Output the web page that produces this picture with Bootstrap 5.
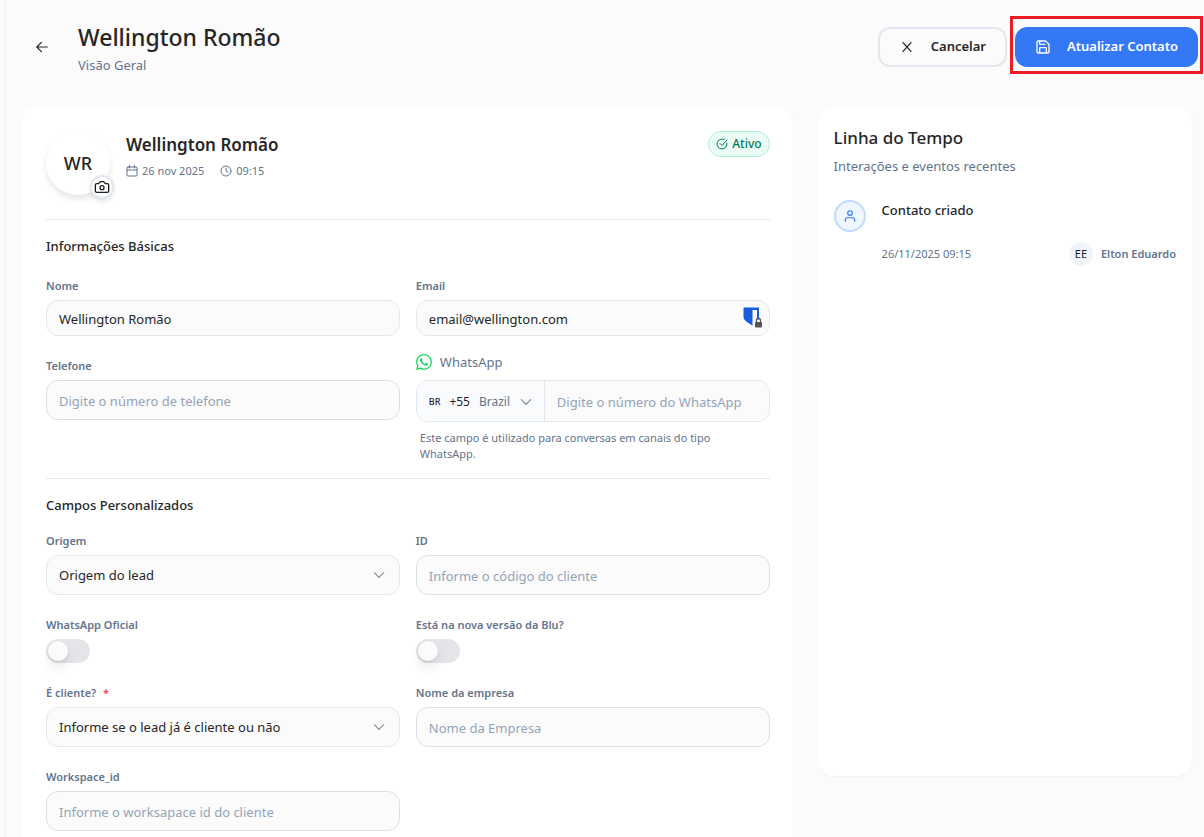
<!DOCTYPE html>
<html lang="pt-BR">
<head>
<meta charset="utf-8">
<meta name="viewport" content="width=device-width, initial-scale=1">
<title>Wellington Romão – Visão Geral</title>
<link rel="stylesheet" href="https://cdn.jsdelivr.net/npm/bootstrap@5.3.0/dist/css/bootstrap.min.css">
<style>
  :root { --ink: #262626; --slate: #64748b; --line: #e2e8f0; --page: #fbfbfb; --blue: #3478f6; }
  body { background: var(--page); color: var(--ink); font-family: "Noto Sans", "Open Sans", sans-serif; font-size: 13px; line-height: 20px; }
  svg { display: block; flex: none; fill: none; stroke: currentColor; stroke-width: 2; stroke-linecap: round; stroke-linejoin: round; }
  .shell { height: 100vh; overflow: hidden; }
  .rail { width: 6px; border-right: 1px solid #f1f1f2; flex: none; }
  .topbar { padding: 19px 6px 32px 28px; }
  .page-title { font-size: 23px; line-height: 36px; font-weight: 500; }
  .panel-title { font-size: 17px; line-height: 28px; font-weight: 500; }
  .section-title { font-size: 13px; line-height: 20px; font-weight: 500; }
  .muted { color: var(--slate); }
  .tiny { font-size: 11px; line-height: 16px; }
  .back-btn { width: 16px; height: 16px; color: var(--ink); border: 0; background: none; padding: 1px; }
  .action { height: 40px; border-radius: 12px; font-size: 13px; font-weight: 600; padding: 0 19px; gap: 16px; display: inline-flex; align-items: center; }
  .action-cancel { border: 2px solid var(--line); color: var(--ink); }
  .action-save { background: var(--blue); border-color: var(--blue); color: #fff; }
  .spotlight { position: relative; }
  .spotlight::after { content: ""; position: absolute; inset: -11px -5px -7px -5px; border: 3px solid #ed1c24; pointer-events: none; }
  .board { display: grid; grid-template-columns: minmax(0, 1fr) minmax(280px, 32%); gap: 25px; padding: 0 12px 0 16px; align-items: start; }
  .panel { background: #fff; border-radius: 16px; box-shadow: 0 1px 2px rgba(0, 0, 0, .04); }
  .panel-main { padding: 24px 23px 24px 24px; }
  .panel-side { padding: 17px 16px; height: calc(100vh - 168px); }
  .avatar { width: 64px; height: 64px; border-radius: 50%; background: #fff; font-size: 18px; font-weight: 500; box-shadow: 0 4px 6px rgba(0, 0, 0, .1); position: relative; }
  .avatar-btn { position: absolute; right: -4px; bottom: -4px; width: 24px; height: 24px; border-radius: 50%; border: 2px solid var(--line); background: #fff; padding: 0; color: #1f1f1f; display: grid; place-items: center; box-shadow: 0 2px 4px rgba(0, 0, 0, .12); }
  .status { height: 26px; border: 1px solid #a7f3d0; border-radius: 13px; background: #ecfdf5; color: #047857; font-size: 12px; font-weight: 500; padding: 0 7px; gap: 4px; }
  .rule { border: 0; border-top: 1px solid var(--line); opacity: 1; margin: 24px 0 16px; }
  .rule-tight { margin-top: 16px; }
  .fields { display: grid; grid-template-columns: 1fr 1fr; column-gap: 16px; row-gap: 20px; }
  .fields-basic { row-gap: 16px; margin-top: 20px; }
  .fields-custom { margin-top: 16px; }
  .tag { display: block; font-size: 11px; line-height: 20px; font-weight: 600; color: var(--slate); margin-bottom: 4px; }
  .required { color: #ef4444; }
  .form-control, .form-select { height: 40px; border: 1px solid var(--line); border-radius: 12px; background-color: var(--page); color: var(--ink); font-size: 13px; line-height: 20px; padding: 2px 12px 0; }
  .form-control.entry { border-color: #dcdfe6; }
  .form-control.short { height: 36px; }
  .form-control::placeholder { color: #94a3b8; opacity: 1; }
  .form-select { padding: 0 40px 0 12px; background-size: 14px 14px; background-position: right 13px center; background-image: url("data:image/svg+xml,%3Csvg xmlns='http://www.w3.org/2000/svg' viewBox='0 0 24 24' fill='none' stroke='%238c8c8c' stroke-width='2' stroke-linecap='round' stroke-linejoin='round'%3E%3Cpath d='m4 8 8 8 8-8'/%3E%3C/svg%3E"); }
  .vault { position: absolute; right: 8px; top: 7px; stroke: none; }
  .wa-tag { font-size: 13px; line-height: 20px; gap: 8px; margin-bottom: 8px; }
  .phone { height: 42px; border: 1px solid var(--line); border-radius: 12px; background: var(--page); overflow: hidden; }
  .phone .form-control { border: 0; border-radius: 0; height: 40px; }
  .country { border: 0; border-right: 1px solid var(--line); background: #f9fbfd; padding: 2px 13px 0 12px; gap: 9px; font-size: 12px; width: 128px; flex: none; color: var(--ink); }
  .country-code { font-size: 9px; font-weight: 500; }
  .country svg { margin-left: auto; color: #7d8590; }
  .hint { margin: 8px 4px 0; }
  .form-switch { padding: 0; min-height: 0; margin: 0; }
  .form-switch .form-check-input { display: block; float: none; margin: 0; width: 44px; height: 24px; border: 0; border-radius: 12px; background: #e4e4e9; padding: 2px; }
  .form-switch .form-check-input::before { content: ""; display: block; width: 20px; height: 20px; border-radius: 50%; background: #fbfbfb; box-shadow: 0 8px 12px rgba(0, 0, 0, .08), 0 1px 3px rgba(0, 0, 0, .08); }
  .form-switch .form-check-input:checked { background: var(--blue); }
  .form-switch .form-check-input:checked::before { margin-left: 20px; }
  .event { margin-top: 24px; gap: 16px; }
  .event-dot { width: 32px; height: 32px; border-radius: 50%; border: 2px solid #bfdbfe; background: #eff6ff; color: var(--blue); flex: none; }
  .event-foot { margin-top: 22px; }
  .initials { width: 24px; height: 24px; border-radius: 50%; background: #f1f5f9; font-size: 11px; color: #1f1f1f; }
</style>
</head>
<body>
<div class="shell d-flex">
  <div class="rail"></div>
  <div class="flex-grow-1">
    <header class="topbar d-flex align-items-center justify-content-between">
      <div class="d-flex align-items-center">
        <button type="button" class="back-btn" aria-label="Voltar"><svg width="14" height="14" viewBox="0 0 24 24"><path d="M11 4 3 12l8 8M3 12h18"/></svg></button>
        <div class="ps-4 ms-1">
          <h1 class="page-title mb-0">Wellington Romão</h1>
          <p class="muted mb-0">Visão Geral</p>
        </div>
      </div>
      <div class="d-flex gap-2">
        <button type="button" class="btn action action-cancel"><svg width="16" height="16" viewBox="0 0 24 24"><path d="M18 5.500 6 18.500M6 5.500l12 13"/></svg>Cancelar</button>
        <div class="spotlight"><button type="submit" form="contact" class="btn action action-save"><svg width="16" height="16" viewBox="0 0 24 24"><path d="M15.200 3a2 2 0 0 1 1.400.6l3.800 3.800a2 2 0 0 1 .6 1.400V19a2 2 0 0 1-2 2H5a2 2 0 0 1-2-2V5a2 2 0 0 1 2-2zM17 21v-7a1 1 0 0 0-1-1H8a1 1 0 0 0-1 1v7M7 3v4a1 1 0 0 0 1 1h7"/></svg>Atualizar Contato</button></div>
      </div>
    </header>

    <main class="board">
      <form id="contact" class="panel panel-main">
        <div class="d-flex align-items-start gap-3">
          <div class="avatar d-flex align-items-center justify-content-center">WR
            <button type="button" class="avatar-btn" aria-label="Alterar foto"><svg width="16" height="16" viewBox="0 0 24 24"><path d="M14.500 4h-5L7 7H4a2 2 0 0 0-2 2v9a2 2 0 0 0 2 2h16a2 2 0 0 0 2-2V9a2 2 0 0 0-2-2h-3z"/><circle cx="12" cy="13" r="3"/></svg></button>
          </div>
          <div class="flex-grow-1">
            <h2 class="panel-title fw-semibold mb-1">Wellington Romão</h2>
            <div class="d-flex gap-3 muted tiny">
              <span class="d-flex align-items-center gap-1"><svg width="12" height="12" viewBox="0 0 24 24"><path d="M7 1v5M17 1v5M2 10h20"/><rect x="2" y="4" width="20" height="18" rx="2"/></svg>26 nov 2025</span>
              <span class="d-flex align-items-center gap-1"><svg width="12" height="12" viewBox="0 0 24 24"><circle cx="12" cy="12" r="10"/><path d="M12 6v6l4 2"/></svg>09:15</span>
            </div>
          </div>
          <span class="status d-flex align-items-center"><svg width="12" height="12" viewBox="0 0 24 24"><path d="M21.800 10A10 10 0 1 1 17 3.300"/><path d="m8 11 4 4L22 4"/></svg>Ativo</span>
        </div>

        <hr class="rule">
        <h3 class="section-title mb-0">Informações Básicas</h3>
        <div class="fields fields-basic">
          <div>
            <label class="tag" for="nome">Nome</label>
            <input class="form-control short" id="nome" type="text" value="Wellington Romão">
          </div>
          <div>
            <label class="tag" for="email">Email</label>
            <div class="position-relative">
              <input class="form-control short" id="email" type="email" value="email@wellington.com">
              <svg class="vault" width="19" height="21" viewBox="0 0 19 21"><path fill="#175ddc" d="M1 .500h14.500q.5 0 .5.500v11.500h-2V3H9.500v15.500C5 16 .5 13.500.5 9.500V1Q.5.500 1 .500"/><rect x="12" y="15" width="7" height="5.500" rx="1" fill="#555"/><path d="M13.500 15v-1.500a2 2 0 0 1 4 0V15" stroke="#555" stroke-width="1.300"/></svg>
            </div>
          </div>
          <div class="pt-1">
            <label class="tag" for="telefone">Telefone</label>
            <input class="form-control entry" id="telefone" type="tel" placeholder="Digite o número de telefone">
          </div>
          <div>
            <label class="wa-tag muted d-flex align-items-center" for="whatsapp">
              <svg width="16" height="16" viewBox="0 0 16 16" style="stroke:none"><path fill="#25d366" d="M13.601 2.326A7.850 7.850 0 0 0 7.994 0C3.627 0 .068 3.558.064 7.926c0 1.399.366 2.760 1.057 3.965L0 16l4.204-1.102a7.900 7.900 0 0 0 3.790.965h.004c4.368 0 7.926-3.558 7.930-7.930A7.900 7.900 0 0 0 13.600 2.326zM7.994 14.521a6.600 6.600 0 0 1-3.356-.920l-.240-.144-2.494.654.666-2.433-.156-.251a6.560 6.560 0 0 1-1.007-3.505c0-3.626 2.957-6.584 6.591-6.584a6.560 6.560 0 0 1 4.660 1.931 6.560 6.560 0 0 1 1.928 4.660c-.004 3.639-2.961 6.592-6.592 6.592m3.615-4.934c-.197-.099-1.170-.578-1.353-.646-.182-.065-.315-.099-.445.099-.133.197-.513.646-.627.775-.114.133-.232.148-.430.050-.197-.100-.836-.308-1.592-.985-.590-.525-.985-1.175-1.103-1.372-.114-.198-.011-.304.088-.403.087-.088.197-.232.296-.346.100-.114.133-.198.198-.330.065-.134.034-.248-.015-.347-.050-.099-.445-1.076-.612-1.470-.160-.389-.323-.335-.445-.340-.114-.007-.247-.007-.380-.007a.730.730 0 0 0-.529.247c-.182.198-.691.677-.691 1.654s.710 1.916.810 2.049c.098.133 1.394 2.132 3.383 2.992.470.205.840.326 1.129.418.475.152.904.129 1.246.080.380-.058 1.171-.480 1.338-.943.164-.464.164-.860.114-.943-.049-.084-.182-.133-.380-.232"/></svg>WhatsApp
            </label>
            <div class="phone d-flex">
              <button type="button" class="country d-flex align-items-center" aria-haspopup="listbox" aria-label="País"><span class="country-code">BR</span><span>+55</span><span class="muted">Brazil</span><svg width="14" height="14" viewBox="0 0 24 24"><path d="m4 8 8 8 8-8"/></svg></button>
              <input class="form-control" id="whatsapp" type="tel" placeholder="Digite o número do WhatsApp">
            </div>
            <p class="hint muted tiny mb-0">Este campo é utilizado para conversas em canais do tipo WhatsApp.</p>
          </div>
        </div>

        <hr class="rule rule-tight">
        <h3 class="section-title mb-0">Campos Personalizados</h3>
        <div class="fields fields-custom">
          <div>
            <label class="tag" for="origem">Origem</label>
            <select class="form-select" id="origem"><option>Origem do lead</option></select>
          </div>
          <div>
            <label class="tag" for="codigo">ID</label>
            <input class="form-control entry" id="codigo" type="text" placeholder="Informe o código do cliente">
          </div>
          <div>
            <label class="tag" for="oficial">WhatsApp Oficial</label>
            <div class="form-check form-switch"><input class="form-check-input" id="oficial" type="checkbox" role="switch"></div>
          </div>
          <div>
            <label class="tag" for="versao">Está na nova versão da Blu?</label>
            <div class="form-check form-switch"><input class="form-check-input" id="versao" type="checkbox" role="switch"></div>
          </div>
          <div>
            <label class="tag" for="cliente">É cliente? <span class="required ms-1">*</span></label>
            <select class="form-select" id="cliente"><option>Informe se o lead já é cliente ou não</option></select>
          </div>
          <div>
            <label class="tag" for="empresa">Nome da empresa</label>
            <input class="form-control entry" id="empresa" type="text" placeholder="Nome da Empresa">
          </div>
          <div>
            <label class="tag" for="workspace">Workspace_id</label>
            <input class="form-control entry" id="workspace" type="text" placeholder="Informe o worksapace id do cliente">
          </div>
        </div>
      </form>

      <aside class="panel panel-side">
        <h2 class="panel-title mb-0">Linha do Tempo</h2>
        <p class="muted mt-1 mb-0">Interações e eventos recentes</p>
        <div class="event d-flex">
          <span class="event-dot d-flex align-items-center justify-content-center"><svg width="14" height="14" viewBox="0 0 24 24"><circle cx="12" cy="7" r="4"/><path d="M4 21v-2a4 4 0 0 1 4-4h8a4 4 0 0 1 4 4v2"/></svg></span>
          <div class="flex-grow-1">
            <h3 class="section-title mb-0">Contato criado</h3>
            <div class="event-foot d-flex align-items-center justify-content-between muted tiny">
              <time datetime="2025-11-26T09:15">26/11/2025 09:15</time>
              <span class="d-flex align-items-center gap-2 fw-semibold"><span class="initials d-flex align-items-center justify-content-center fw-normal">EE</span>Elton Eduardo</span>
            </div>
          </div>
        </div>
      </aside>
    </main>
  </div>
</div>
<script src="https://cdn.jsdelivr.net/npm/bootstrap@5.3.0/dist/js/bootstrap.bundle.min.js"></script>
</body>
</html>
